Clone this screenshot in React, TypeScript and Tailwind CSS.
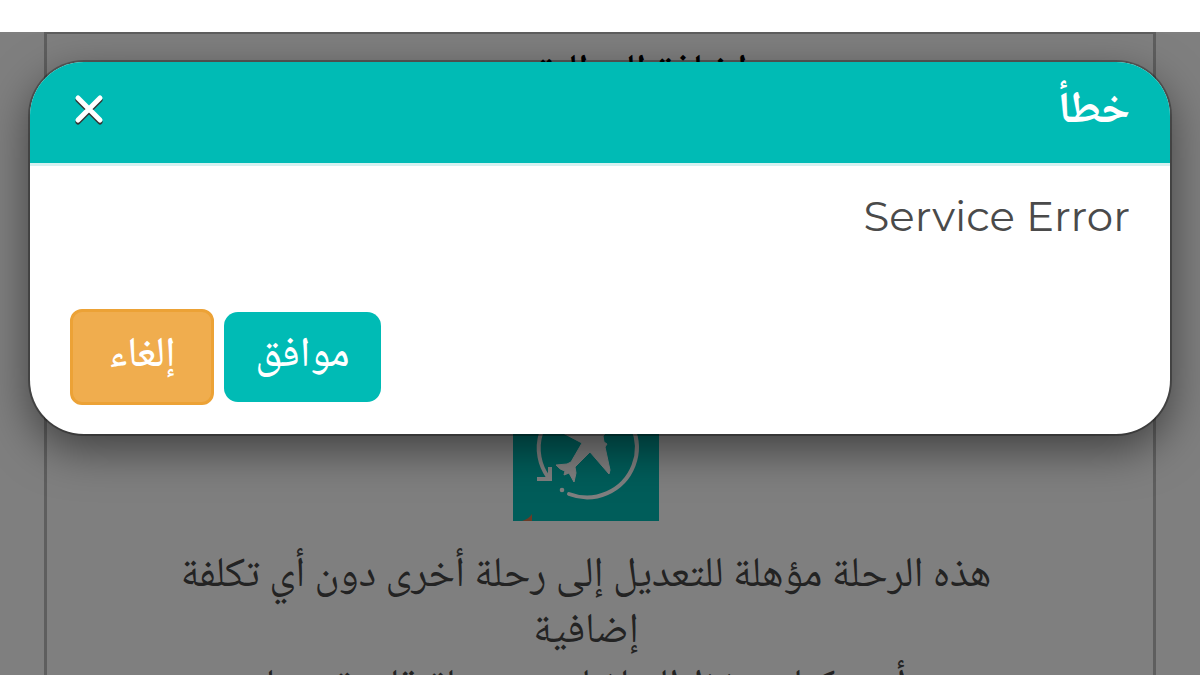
function FlightChangeIcon() {
  return (
    <svg viewBox="0 0 146 146" className="size-[146px] shrink-0 bg-[#00bbb5]" aria-hidden="true">
      <g fill="none" stroke="#fff" strokeWidth="4" strokeLinecap="round" strokeLinejoin="round">
        <path d="M56 119A49.500 49.500 0 1 0 92 26" />
        <path d="M60 26A49.500 49.500 0 0 0 35 102" />
        <path d="M26 104H37V94" strokeLinecap="square" strokeLinejoin="miter" />
      </g>
      <circle cx="49" cy="115" r="2.300" fill="#fff" />
      <path
        d="M48 57L69 68L58 87L54 89L43 90Q47 95 52 96L51 100L56 98L61 107L63 98L62 92L77 77L96 99L97 95L92 72L94 69L91 67L90 61L106 42Q112 32 102 35L84 52L53 47Z"
        fill="#fff"
        stroke="#fff"
        strokeLinejoin="round"
      />
      <path d="M9 146Q16 144 19 139V146Z" fill="#d9744a" />
    </svg>
  );
}

function CloseIcon() {
  return (
    <svg viewBox="0 0 30 32" className="h-8 w-[30px]" fill="none" strokeWidth="5" strokeLinecap="round" aria-hidden="true">
      <path d="M4 7L26 29M26 7L4 29" stroke="#333" />
      <path d="M4 5L26 27M26 5L4 27" stroke="#fff" />
    </svg>
  );
}

export default function App() {
  return (
    <div dir="rtl" className="flex h-screen flex-col overflow-hidden bg-white">
      <div className="h-8 shrink-0" />
      <div className='relative min-h-0 flex-1 overflow-hidden font-["Noto_Naskh_Arabic","DejaVu_Sans",sans-serif]'>
        <main className="mx-11 flex min-h-full flex-col items-center border-x-3 border-t-2 border-[#bdbdbd] pr-7">
          <h1 className="mt-3 mb-[273px] pl-14 text-[42px] leading-14 font-medium text-black">
            إضافة إلى التقويم
          </h1>
          <FlightChangeIcon />
          <p className="mt-7 max-w-[880px] text-center text-[42px] leading-14 text-[#464646]">
            هذه الرحلة مؤهلة للتعديل إلى رحلة أخرى دون أي تكلفة إضافية
            <br />
            أو يمكنك حفظ المبلغ لحجز رحلة قادمة معنا
          </p>
        </main>

        <div className="absolute inset-0 bg-black/50 px-[30px] pt-[30px]">
          <section
            role="dialog"
            aria-modal="true"
            aria-labelledby="dialog-title"
            className="overflow-hidden rounded-[54px] bg-white shadow-[0_0_0_2px_rgba(0,0,0,0.3),0_15px_45px_rgba(0,0,0,0.5)]"
          >
            <header className="flex h-[104px] items-center justify-between border-b-3 border-[#d5f1f0] bg-[#00bbb5] px-10">
              <h2 id="dialog-title" className="text-[44px] leading-14 font-bold text-white">
                خطأ
              </h2>
              <button type="button" aria-label="إغلاق" className="mx-1 mb-2">
                <CloseIcon />
              </button>
            </header>
            <p dir="ltr" className='px-10 pt-[22px] text-right font-["Montserrat","Inter",sans-serif] text-[42px] leading-14 text-[#4a4a4a]'>
              Service Error
            </p>
            <footer className="flex items-center justify-end gap-[10px] px-10 pt-[65px] pb-[29px] text-[42px] leading-14 font-medium text-white">
              <button type="button" className="flex h-[90px] w-[157px] items-center justify-center rounded-[14px] bg-[#00bbb5]">
                موافق
              </button>
              <button type="button" className="flex h-24 w-36 items-center justify-center rounded-xl border-3 border-[#eca236] bg-[#f0ad4e]">
                إلغاء
              </button>
            </footer>
          </section>
        </div>
      </div>
    </div>
  );
}
